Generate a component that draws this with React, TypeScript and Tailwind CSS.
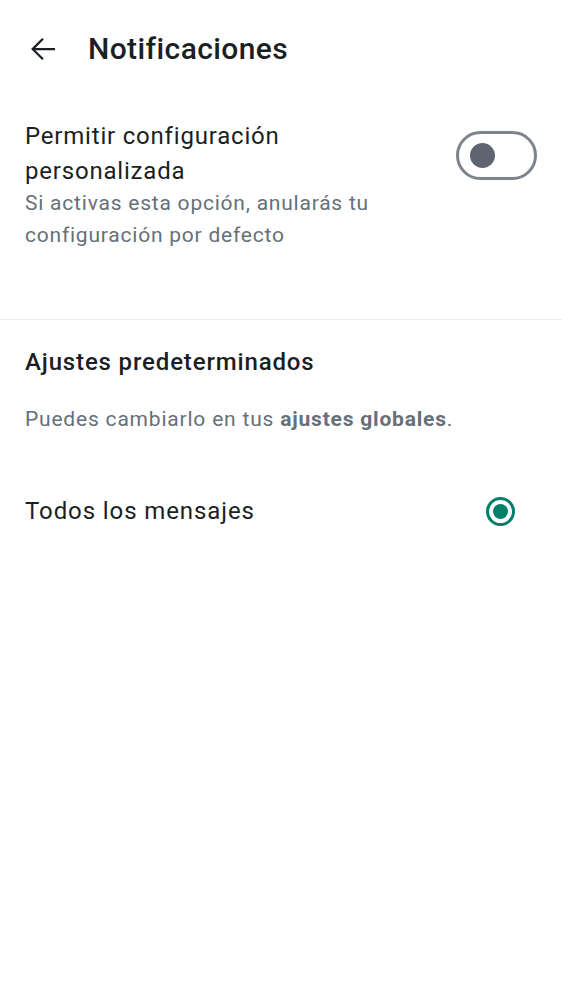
import React from "react";

export default function App() {
  return (
    <div
      className="w-[562px] h-[1000px] bg-white text-[#1b1f24]"
      style={{ fontFamily: "Roboto, 'Noto Sans', sans-serif" }}
    >
      <div className="flex items-center h-[98px] pl-[25px]">
        <svg width="36" height="36" viewBox="0 0 24 24" className="shrink-0">
          <path
            d="M20 11.25H6.9l5.6-5.6-1.06-1.06L4.03 12l7.41 7.41 1.06-1.06-5.6-5.6H20z"
            fill="#1b1f24"
          />
        </svg>
        <div className="ml-[27px] text-[30px] font-medium leading-none tracking-[0.4px]">
          Notificaciones
        </div>
      </div>

      <div className="flex items-start justify-between pl-[25px] pr-[25px] pt-[21px] pb-[68px]">
        <div className="flex flex-col">
          <div className="text-[24px] leading-[35px] tracking-[0.8px] text-[#1b1f24]">
            Permitir configuración
            <br />
            personalizada
          </div>
          <div className="-mt-[2px] text-[21px] leading-[32px] text-[#667079] tracking-[0.78px]">
            Si activas esta opción, anularás tu
            <br />
            configuración por defecto
          </div>
        </div>
        <div className="mt-[12px] w-[81px] h-[49px] rounded-full border-[3px] border-[#7d838c] flex items-center pl-[11px] shrink-0">
          <div className="w-[25px] h-[25px] rounded-full bg-[#5e6570]" />
        </div>
      </div>

      <div className="h-px bg-[#ececec]" />

      <div className="pl-[25px] pt-[27px] text-[24px] font-medium leading-[30px] tracking-[0.85px] text-[#1b1f24]">
        Ajustes predeterminados
      </div>
      <div className="pl-[25px] pt-[27px] text-[21px] leading-[30px] text-[#667079] tracking-[0.8px]">
        Puedes cambiarlo en tus <span className="font-bold">ajustes globales</span>.
      </div>

      <div className="flex items-center justify-between pl-[25px] pr-[47px] pt-[62px]">
        <div className="text-[24px] leading-[30px] tracking-[0.9px] text-[#1b1f24]">Todos los mensajes</div>
        <div className="w-[29px] h-[29px] rounded-full border-[3px] border-[#008069] flex items-center justify-center">
          <div className="w-[15px] h-[15px] rounded-full bg-[#008069]" />
        </div>
      </div>
    </div>
  );
}
